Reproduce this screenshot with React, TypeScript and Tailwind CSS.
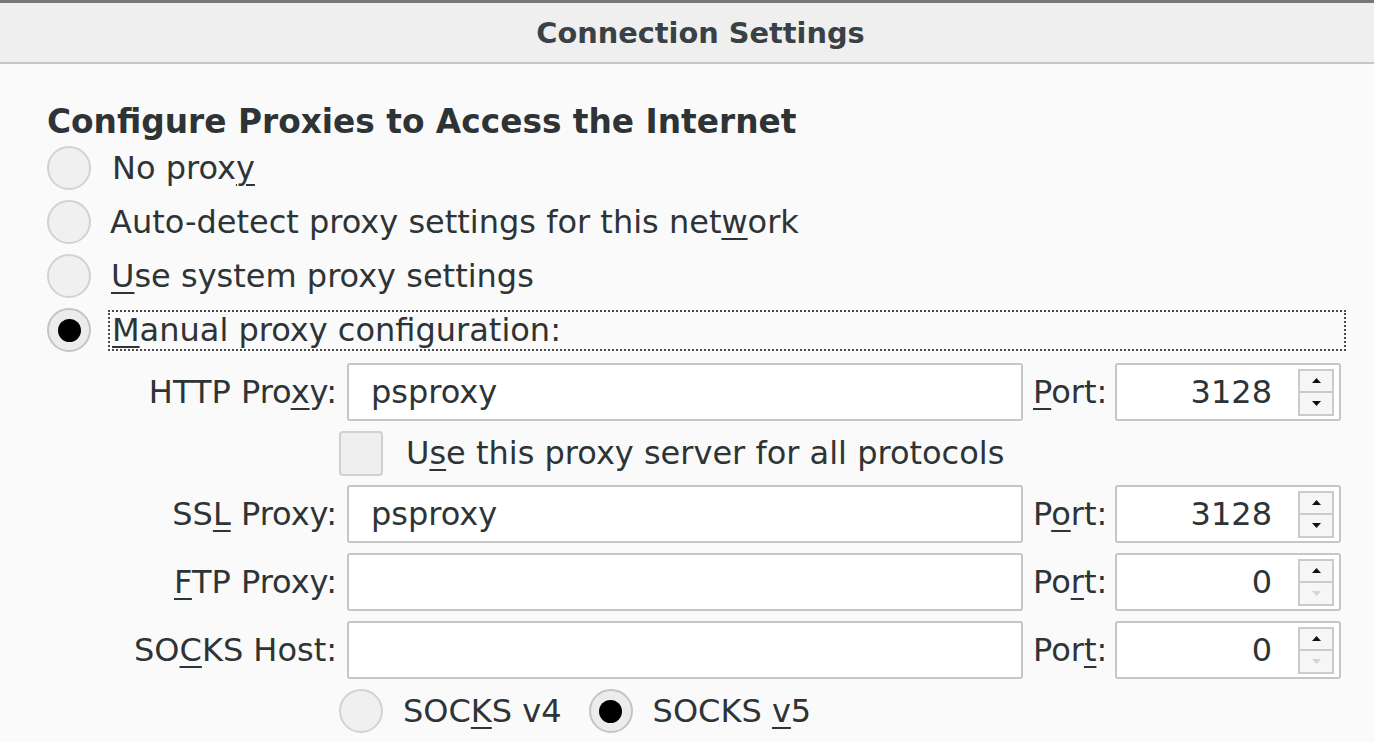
import React from "react";

function Radio({ checked }: { checked?: boolean }) {
  return (
    <div
      className={
        "w-[44px] h-[44px] shrink-0 rounded-full border-2 flex items-center justify-center " +
        (checked ? "border-[#c4c4c4] bg-[#ececec]" : "border-[#d2d2d2] bg-[#f0f0f0]")
      }
    >
      {checked && <div className="w-[23px] h-[23px] rounded-full bg-black" />}
    </div>
  );
}

function U({ children }: { children: React.ReactNode }) {
  return <span className="underline decoration-[2px] underline-offset-[5px]">{children}</span>;
}

function Spin({ value, disabledDown }: { value: string; disabledDown?: boolean }) {
  return (
    <div className="h-[58px] bg-white border-2 border-[#c6c6c6] rounded-[3px] flex items-center">
      <div className="flex-1 text-right pr-[26px]">{value}</div>
      <div className="w-[36px] h-[47px] mr-[5px] border-2 border-[#cbcbcb] bg-[#f6f6f6] flex flex-col">
        <div className="flex-1 flex items-center justify-center border-b-2 border-[#cbcbcb]">
          <svg width="9" height="5" viewBox="0 0 9 5">
            <polygon points="4.5,0 9,5 0,5" fill="#111" />
          </svg>
        </div>
        <div className="flex-1 flex items-center justify-center">
          <svg width="9" height="5" viewBox="0 0 9 5">
            <polygon points="0,0 9,0 4.5,5" fill={disabledDown ? "#d4d4d4" : "#111"} />
          </svg>
        </div>
      </div>
    </div>
  );
}

function TextInput({ value }: { value?: string }) {
  return (
    <div className="h-[58px] bg-white border-2 border-[#c6c6c6] rounded-[3px] flex items-center pl-[22px]">
      {value}
    </div>
  );
}

function Row({
  label,
  value,
  portLabel,
  port,
  disabledDown,
}: {
  label: React.ReactNode;
  value?: string;
  portLabel: React.ReactNode;
  port: string;
  disabledDown?: boolean;
}) {
  return (
    <>
      <div className="text-right self-center">{label}</div>
      <TextInput value={value} />
      <div className="self-center">{portLabel}</div>
      <Spin value={port} disabledDown={disabledDown} />
    </>
  );
}

export default function App() {
  return (
    <div className="w-[1374px] h-[742px] overflow-hidden bg-[#fafafa] text-[#2e3436] font-['DejaVu_Sans',sans-serif] text-[32px] leading-[40px]">
      <div className="h-[3px] bg-[#787878]" />
      <div className="h-[61px] bg-[#efefef] border-b-2 border-[#c6c6c6] flex items-center justify-center pl-[27px] text-[28.8px] font-bold text-[#3a4145]">
        Connection Settings
      </div>
      <div className="pl-[47px] pr-[28px] pt-[40px]">
        <div className="font-bold text-[32.8px] leading-[36px]">Configure Proxies to Access the Internet</div>
        <div className="mt-[6px] flex flex-col gap-[10px]">
          <div className="flex items-center h-[44px]">
            <Radio />
            <div className="ml-[19px] pl-[2px]">
              No prox<U>y</U>
            </div>
          </div>
          <div className="flex items-center h-[44px]">
            <Radio />
            <div className="ml-[17px] pl-[2px]">
              Auto-detect proxy settings for this net<U>w</U>ork
            </div>
          </div>
          <div className="flex items-center h-[44px]">
            <Radio />
            <div className="ml-[18px] pl-[2px]">
              <U>U</U>se system proxy settings
            </div>
          </div>
          <div className="flex items-center h-[44px]">
            <Radio checked />
            <div className="ml-[17px] flex-1 h-[41px] border-2 border-dotted border-[#4a4a4a] flex items-center pl-[2px]">
              <U>M</U>anual proxy configuration:
            </div>
          </div>
        </div>
        <div className="mt-[11px] ml-[63px] grid grid-cols-[227px_676px_72px_226px] gap-x-[10px] gap-y-[10px]">
          <Row
            label={
              <>
                HTTP Pro<U>x</U>y:
              </>
            }
            value="psproxy"
            portLabel={
              <>
                <U>P</U>ort:
              </>
            }
            port="3128"
          />
          <div className="col-span-4 h-[44px] flex items-center pl-[229px]">
            <div className="w-[44px] h-[45px] rounded-[4px] border-2 border-[#d0d0d0] bg-[#efefef]" />
            <div className="ml-[23px]">
              U<U>s</U>e this proxy server for all protocols
            </div>
          </div>
          <Row
            label={
              <>
                SS<U>L</U> Proxy:
              </>
            }
            value="psproxy"
            portLabel={
              <>
                P<U>o</U>rt:
              </>
            }
            port="3128"
          />
          <Row
            label={
              <>
                <U>F</U>TP Proxy:
              </>
            }
            portLabel={
              <>
                Po<U>r</U>t:
              </>
            }
            port="0"
            disabledDown
          />
          <Row
            label={
              <>
                SO<U>C</U>KS Host:
              </>
            }
            portLabel={
              <>
                Por<U>t</U>:
              </>
            }
            port="0"
            disabledDown
          />
          <div className="col-span-4 h-[44px] flex items-center pl-[229px]">
            <Radio />
            <div className="ml-[20px]">
              SOC<U>K</U>S v4
            </div>
            <div className="ml-[27px]">
              <Radio checked />
            </div>
            <div className="ml-[20px]">
              SOCKS <U>v</U>5
            </div>
          </div>
        </div>
      </div>
    </div>
  );
}
